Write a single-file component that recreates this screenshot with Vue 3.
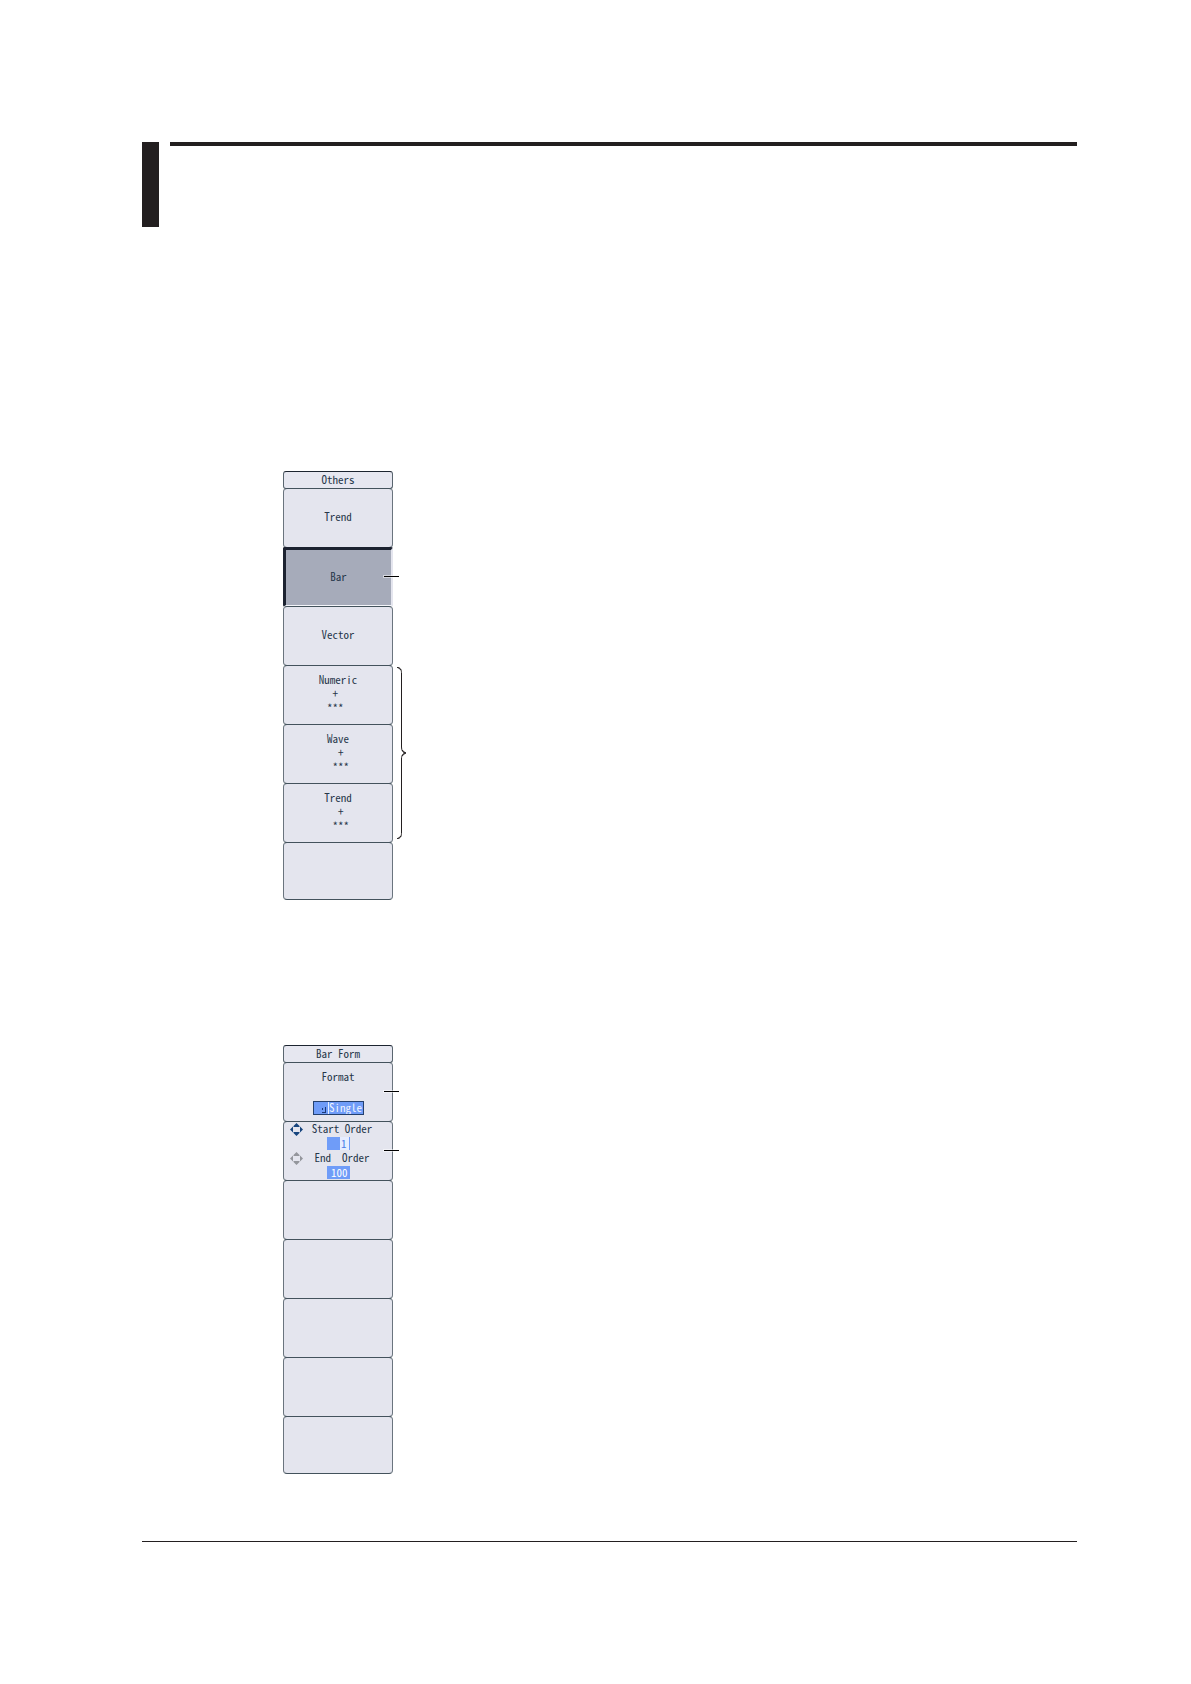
<template>
  <div class="page">
    <header class="head">
      <div class="head-tab"></div>
      <div class="head-rule"></div>
    </header>

    <main class="body">
      <section class="panel">
        <nav class="menu" aria-label="Others">
          <h2 class="menu-title">Others</h2>
          <button
            v-for="(item, i) in displays"
            :key="i"
            type="button"
            class="key"
            :class="{ active: i === current, multi: item.length > 1 }"
            @click="select(i)"
          >
            <span v-for="(line, n) in item" :key="n" class="line">{{ line }}</span>
          </button>
        </nav>
        <div class="callouts">
          <i class="leader on-bar"></i>
          <svg class="brace" viewBox="0 0 10 172" fill="none" stroke="#231f20">
            <path d="M0 .5C4 .5 4.500 3 4.500 7V80C4.500 84 6 86 9 86C6 86 4.500 88 4.500 92V165C4.500 169 4 171.500 0 171.500" />
            <path d="M1 .5L4 3M5 83L8.500 86L5 89M4 169L1 171.500" />
          </svg>
        </div>
      </section>

      <section class="panel">
        <form class="menu" aria-label="Bar Form" @submit.prevent>
          <h2 class="menu-title">Bar Form</h2>
          <div class="key format">
            <label for="format">Format</label>
            <div class="format-box">
              <svg class="bars" viewBox="0 0 14 12" fill="none" stroke="#1c3a78">
                <path d="M8.500 6V8M8 10.500H12M11.500 5V10" />
              </svg>
              <select id="format" v-model="format">
                <option>Single</option>
                <option>Dual</option>
                <option>Triad</option>
              </select>
            </div>
          </div>
          <div class="key orders">
            <div v-for="o in orders" :key="o.id" class="order" :class="{ off: !o.focused }">
              <svg class="arrows" viewBox="0 0 13 13">
                <path d="M6.500 0L9.500 3V4H3.500V3ZM6.500 13L3.500 10V9H9.500V10ZM0 6.500L3 3.500V9.500ZM13 6.500L10 9.500V3.500Z" />
              </svg>
              <label :for="o.id">{{ o.label }}</label>
              <input :id="o.id" v-model="o.value" type="text" />
            </div>
          </div>
          <button v-for="n in 5" :key="n" type="button" class="key" :aria-label="'Key ' + (n + 2)"></button>
        </form>
        <div class="callouts">
          <i class="leader on-format"></i>
          <i class="leader on-order"></i>
        </div>
      </section>
    </main>

    <footer class="foot"></footer>
  </div>
</template>

<script setup>
import { ref, reactive } from 'vue'

const displays = [
  ['Trend'],
  ['Bar'],
  ['Vector'],
  ['Numeric', '+ ', '*** '],
  ['Wave', ' +', ' ***'],
  ['Trend', ' +', ' ***'],
  []
]
const current = ref(1)
const format = ref('Single')
const orders = reactive([
  { id: 'start-order', label: 'Start Order', value: '1', focused: true },
  { id: 'end-order', label: 'End  Order', value: '100', focused: false }
])

function select(i) {
  if (displays[i].length) current.value = i
}
</script>

<style>
body { margin: 0; background: #fff; }
</style>

<style scoped>
.page { box-sizing: border-box; min-height: 100vh; padding: 142px 114px 142px 142px; display: flex; flex-direction: column; font-family: "Noto Sans Mono CJK SC", "DejaVu Sans Condensed", monospace; font-size: 11px; line-height: 13px; color: #27374a; }

.head { display: flex; gap: 11px; }
.head-tab { width: 17px; height: 85px; background: #231f20; }
.head-rule { flex: 1; height: 4px; background: #231f20; }

.body { flex: 1; display: flex; flex-direction: column; gap: 145px; padding: 244px 0 0 141px; }
.panel { display: flex; align-items: flex-start; }
.menu { width: 110px; display: flex; flex-direction: column; }
.menu-title { box-sizing: border-box; height: 18px; margin: 0; border: 1px solid #59656f; border-top-color: #1c2430; border-radius: 3px; background: #e6e7f0; font-size: inherit; font-weight: normal; line-height: 14px; text-align: center; }
.key { box-sizing: border-box; width: 100%; height: 60px; margin: -1px 0 0; padding: 0 0 3px; display: flex; flex-direction: column; align-items: center; justify-content: center; border: 1px solid #6a747e; border-top-color: #43525c; border-bottom-color: #43525c; border-radius: 4px; background: #e4e5ee; color: inherit; font: inherit; }
.key:last-child { height: 58px; }
.key.multi { justify-content: flex-start; padding-top: 6px; line-height: 14px; }
.key.active { border-color: #1c2230 #e4e5ee #f4f5fa #1c2230; border-width: 3px 2px 2px 3px; border-radius: 2px; background: #a6abba; }
.line, label { white-space: pre; }

.format { justify-content: space-between; padding: 7px 0 6px; }
.format-box { box-sizing: border-box; width: 51px; height: 14px; display: flex; align-items: center; border: 1px solid #24406e; background: #6f9cf8; }
.bars { width: 14px; height: 12px; border-right: 1px solid #e6edff; }
select { box-sizing: border-box; flex: 1; min-width: 0; height: 20px; padding: 0 0 2px; border: 0; outline: 0; appearance: none; background: none; color: #f0f4ff; font: inherit; text-align: center; }

.orders { justify-content: flex-start; padding: 0; }
.order { width: 100%; display: grid; grid-template-columns: 13px 1fr; grid-template-rows: 15px 13px; column-gap: 5px; box-sizing: border-box; padding: 0 16px 0 6px; height: 29px; }
.order label { justify-self: center; line-height: 13px; }
.arrows { width: 13px; height: 13px; margin-top: 1px; fill: #17457e; }
.off .arrows { fill: #94969c; }
.order input { box-sizing: border-box; grid-column: 1 / 3; justify-self: center; width: 23px; height: 13px; margin-left: 10px; padding: 0 2px 2px; border: 0; background: #6f9cf8; color: #fff; font: inherit; line-height: 11px; text-align: right; }
.order:not(.off) input { border-right: 1px solid #6f9cf8; background: linear-gradient(90deg, #6f9cf8 13px, #e6edff 13px); color: #4d7fe8; }

.callouts { width: 24px; margin-left: -9px; display: flex; flex-direction: column; position: relative; }
.leader { width: 15px; height: 1px; background: #000; box-shadow: 0 0 0 1px #ffffff80; }
.on-bar { margin-top: 105px; }
.brace { width: 10px; height: 172px; margin: 90px 0 0 13px; }
.on-format { margin-top: 46px; }
.on-order { margin-top: 58px; }

.foot { height: 1px; background: #231f20; }
</style>
